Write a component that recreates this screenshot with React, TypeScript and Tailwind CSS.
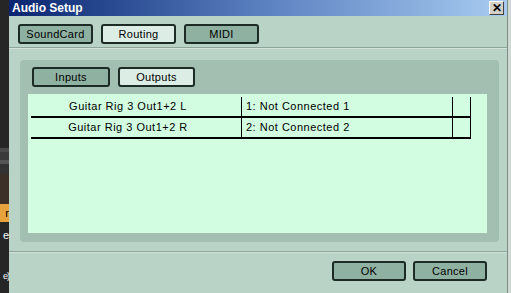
import React from 'react';

type BtnProps = { label: string; active?: boolean; w?: string };

const PanelButton = ({ label, active = false, w = 'w-[75px]' }: BtnProps) => (
  <div
    className={`${w} h-[20px] flex items-center justify-center rounded-[3px] border-2 border-[#1c2b25] text-[11px] tracking-[0.3px] text-black ${
      active ? 'bg-[#dcede5]' : 'bg-[#8fb1a2]'
    }`}
  >
    {label}
  </div>
);

const rows = [
  { src: 'Guitar Rig 3 Out1+2 L', dst: '1: Not Connected 1' },
  { src: 'Guitar Rig 3 Out1+2 R', dst: '2: Not Connected 2' },
];

export default function App() {
  return (
    <div
      className="w-[511px] h-[293px] flex overflow-hidden bg-[#1e1e1e]"
      style={{ fontFamily: '"Liberation Sans", Arial, sans-serif' }}
    >
      {/* strip of the app behind the dialog */}
      <div className="w-[9px] flex flex-col bg-[#262626] text-[11px] leading-none">
        <div className="h-[148px]" />
        <div className="h-[4px] bg-[#4a4a4a]" />
        <div className="h-[8px] bg-[#3a3a3a]" />
        <div className="h-[4px] bg-[#555]" />
        <div className="h-[10px] bg-[#333]" />
        <div className="h-[30px] bg-[#3b2f27]" />
        <div className="h-[18px] bg-[#e8a23c] text-black flex items-center justify-end">r</div>
        <div className="h-[26px] text-white flex items-center justify-end">e</div>
        <div className="h-[20px]" />
        <div className="h-[16px] text-white flex items-center justify-end text-[9px] tracking-[-1px]">e)</div>
      </div>

      {/* dialog */}
      <div className="w-[499px] flex flex-col bg-[#b9d3c6] border-r border-[#7f8f88]">
        <div className="h-[16px] flex items-center justify-between pl-[3px] pr-[3px] bg-gradient-to-r from-[#0b2470] via-[#5a7fbf] to-[#a8ccf0]">
          <span className="text-[12px] font-bold text-white leading-none">Audio Setup</span>
          <div className="w-[15px] h-[14px] flex items-center justify-center bg-[#d4d0c8] border border-t-white border-l-white border-r-[#404040] border-b-[#404040] text-[12px] font-bold leading-none text-black">
            ✕
          </div>
        </div>

        <div className="flex gap-2 pl-[9px] pt-[8px]">
          <PanelButton label="SoundCard" />
          <PanelButton label="Routing" active />
          <PanelButton label="MIDI" />
        </div>

        <div className="mt-[3px] h-[2px] border-t border-[#8ea699] border-b border-b-[#d3e4dc]" />

        <div className="ml-[11px] mr-[8px] mt-[11px] h-[182px] flex flex-col rounded-[4px] bg-[#a3bfb2] pt-[7px] pl-[8px] pr-[12px] pb-[9px]">
          <div className="flex gap-2 pl-[4px]">
            <PanelButton label="Inputs" w="w-[78px]" />
            <PanelButton label="Outputs" w="w-[77px]" active />
          </div>
          <div className="mt-[7px] flex-1 bg-[#d3fde0] pt-[3px] pl-[3px] text-[11px] tracking-[0.5px] text-black">
            {rows.map((r) => (
              <div key={r.src} className="flex h-[21px] w-[440px] border-b-2 border-black">
                <div className="w-[210px] flex items-center justify-center pr-[16px]">{r.src}</div>
                <div className="w-[211px] flex items-center pl-[4px] border-l border-black">{r.dst}</div>
                <div className="w-[19px] border-l border-r border-black" />
              </div>
            ))}
          </div>
        </div>

        <div className="mt-[9px] h-[2px] border-t border-[#8ea699] border-b border-b-[#cfe1d8]" />

        <div className="flex justify-end gap-[7px] pr-[20px] pt-[8px]">
          <PanelButton label="OK" w="w-[74px]" />
          <PanelButton label="Cancel" w="w-[74px]" />
        </div>
      </div>
      <div className="flex-1 bg-[#cfd9d4]" />
    </div>
  );
}
